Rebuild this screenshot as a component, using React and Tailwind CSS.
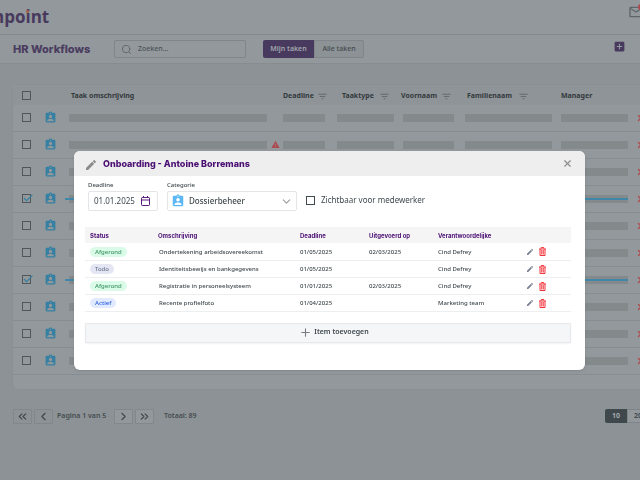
import React from "react";
import { MdAssignmentInd, MdFilterList, MdWarning, MdAddBox, MdOutlineMail } from "react-icons/md";
import { ChevronLeft, ChevronRight, ChevronsLeft, ChevronsRight, ChevronDown, X, Plus, Search } from "lucide-react";

const heading = "font-['Inter','Liberation_Sans',sans-serif] font-extrabold";

const rows = [
  { done: false, warn: false },
  { done: false, warn: true },
  { done: false, warn: false },
  { done: true, warn: false },
  { done: false, warn: false },
  { done: false, warn: false },
  { done: true, warn: false },
  { done: false, warn: false },
  { done: false, warn: false },
  { done: false, warn: false },
];

const items = [
  { status: "Afgerond", text: "Ondertekening arbeidsovereekomst", deadline: "01/05/2025", done: "02/03/2025", owner: "Cind Defrey" },
  { status: "Todo", text: "Identiteitsbewijs en bankgegevens", deadline: "01/05/2025", done: "", owner: "Cind Defrey" },
  { status: "Afgerond", text: "Registratie in personeelsysteem", deadline: "01/01/2025", done: "02/03/2025", owner: "Cind Defrey" },
  { status: "Actief", text: "Recente profielfoto", deadline: "01/04/2025", done: "", owner: "Marketing team" },
];

const badge = {
  Afgerond: "bg-[#d9fbe8] text-[#3f9467]",
  Todo: "bg-[#e4e7f3] text-[#6c7590]",
  Actief: "bg-[#e2eaff] text-[#2c62e0]",
};

function Tick({ label, checked }) {
  return (
    <span className="relative block size-[9px]">
      <input
        type="checkbox"
        aria-label={label}
        defaultChecked={checked}
        className="block size-[9px] appearance-none border border-[#50575b]"
      />
      {checked && (
        <svg viewBox="0 0 10 8" className="pointer-events-none absolute top-0 left-px h-2 w-[10px]" fill="none" stroke="#3580a3" strokeWidth="1.2">
          <path d="M1 4l2.6 2.6L9.4 .8" />
        </svg>
      )}
    </span>
  );
}

function Bar({ width }) {
  return <div className={`h-2 bg-[#84898c] ${width}`} />;
}

function HeadCell({ children, gap, className = "" }) {
  return (
    <th scope="col" className={`p-0 pt-[2px] text-left font-bold ${className}`}>
      <span className={`flex items-center ${gap || ""}`}>
        {children}
        {gap && <MdFilterList className="size-[11px] text-[#646a6d]" />}
      </span>
    </th>
  );
}

function TaskTable() {
  return (
    <div className="mt-5 ml-3 rounded-md border border-[#898f92] bg-[#92989b] pb-[14px]">
      <table className="w-full table-fixed border-collapse">
        <colgroup>
          <col className="w-[31px]" />
          <col className="w-[25px]" />
          <col className="w-[214px]" />
          <col className="w-[54px]" />
          <col className="w-[64px]" />
          <col className="w-[64px]" />
          <col className="w-[96px]" />
          <col className="w-[75px]" />
          <col />
        </colgroup>
        <thead className="bg-[#8e9497] text-[7px] text-[#33393d]">
          <tr className="h-5">
            <th className="p-0 pl-[9px]"><Tick label="Alles selecteren" /></th>
            <td />
            <HeadCell className="pl-[2px]">Taak omschrijving</HeadCell>
            <HeadCell gap="gap-[3px]">Deadline</HeadCell>
            <HeadCell gap="gap-[5px]" className="pl-[5px]">Taaktype</HeadCell>
            <HeadCell gap="gap-[4px]">Voornaam</HeadCell>
            <HeadCell gap="gap-[6px]" className="pl-[2px]">Familienaam</HeadCell>
            <HeadCell>Manager</HeadCell>
            <td />
          </tr>
        </thead>
        <tbody>
          {rows.map((r, i) => (
            <tr key={i} className="h-[27px] border-b border-[#878d90] first:h-[26px]">
              <td className="p-0 pl-[9px]"><Tick label={`Taak ${i + 1}`} checked={r.done} /></td>
              <td className="p-0"><MdAssignmentInd className="size-[13px] text-[#3580a3]" /></td>
              <td className="relative p-0">
                <div className="flex items-center gap-1">
                  <Bar width="w-[198px]" />
                  {r.warn && <MdWarning className="size-[9px] text-[#ab4a50]" />}
                </div>
                {r.done && <div className="absolute top-[12px] -left-1 h-[2px] w-[563px] bg-[#3f87a8]" />}
              </td>
              <td className="p-0"><Bar width="w-[42px]" /></td>
              <td className="p-0"><Bar width="w-[57px]" /></td>
              <td className="p-0 pl-[2px]"><Bar width="w-[51px]" /></td>
              <td className="p-0"><Bar width="w-[87px]" /></td>
              <td className="p-0"><Bar width="w-[67px]" /></td>
              <td className="p-0">
                <button type="button" aria-label="Verwijderen" className="block"><X className="size-[10px] text-[#b0474c]" strokeWidth={3} /></button>
              </td>
            </tr>
          ))}
        </tbody>
      </table>
    </div>
  );
}

function PageButton({ label, icon: Icon, active }) {
  return (
    <button
      type="button"
      aria-label={label}
      className={`flex h-[15px] w-[19px] items-center justify-center rounded-[1px] border border-[#81878a] ${active ? "bg-[#92989b]" : ""}`}
    >
      <Icon className="size-[13px] text-[#3f464a]" strokeWidth={2} />
    </button>
  );
}

function Pencil({ className }) {
  return (
    <svg viewBox="0 0 18 18" className={className} fill="currentColor">
      <path d="M0 14.200V18h3.800L14.800 6.900l-3.700-3.700zM17.700 4c.4-.4.4-1 0-1.400L15.400.3c-.4-.4-1-.4-1.400 0l-1.900 1.900 3.700 3.700z" />
    </svg>
  );
}

function Trash() {
  return (
    <svg viewBox="0 0 14 18" className="h-[9px] w-[7px]" fill="none" stroke="#f5333b" strokeWidth="2">
      <path d="M0 4h14M4.500 3.500V1h5v2.500M2 4v13h10V4M5.500 6v9M8.500 6v9" />
    </svg>
  );
}

function Calendar() {
  return (
    <svg viewBox="0 0 18 20" className="h-[10px] w-[9px]" fill="none" stroke="#5b1a7d" strokeWidth="2">
      <rect x="1" y="3" width="16" height="16" rx="1.500" />
      <path d="M1 8h16M5 0v4M13 0v4" />
    </svg>
  );
}

function Dialog() {
  return (
    <div className="fixed inset-0 pt-[151px] pr-[55px] pl-[74px]">
      <section role="dialog" aria-labelledby="dlg" className="overflow-hidden rounded-[6px] bg-white pb-[27px] text-[#3f484d] shadow-sm">
        <header className="flex h-[25px] items-center bg-[#eeeeee] pr-3 pl-3">
          <Pencil className="mt-[2px] size-[10px] text-[#8b8b8b]" />
          <h2 id="dlg" className={`ml-[7px] text-[9px] text-[#4b0f73] ${heading}`}>Onboarding - Antoine Borremans</h2>
          <button type="button" aria-label="Sluiten" className="ml-auto"><X className="size-[11px] text-[#8b8b8b]" strokeWidth={2.5} /></button>
        </header>

        <form className="flex items-end gap-[9px] px-[14px] pt-1">
          <div className="w-[70px]">
            <label htmlFor="deadline" className="block h-[11px] text-[6px] leading-[10px] font-medium">Deadline</label>
            <div className="flex h-5 items-center rounded-[2px] border border-[#e3e5e8] pr-[7px] pl-[5px]">
              <input id="deadline" defaultValue="01.01.2025" className="w-0 flex-1 text-[8px] outline-none" />
              <Calendar />
            </div>
          </div>
          <div className="w-[130px]">
            <label htmlFor="categorie" className="block h-[11px] text-[6px] leading-[10px] font-medium">Categorie</label>
            <div className="flex h-5 items-center rounded-[2px] border border-[#e3e5e8] px-[3px]">
              <MdAssignmentInd className="size-[14px] text-[#5cb8f5]" />
              <select id="categorie" className="ml-1 flex-1 appearance-none text-[8px] font-medium outline-none">
                <option>Dossierbeheer</option>
              </select>
              <ChevronDown className="size-[13px] text-[#9a9ea1]" strokeWidth={2} />
            </div>
          </div>
          <label className="flex h-5 items-center gap-[6px] pb-[2px] text-[8px]">
            <input type="checkbox" className="size-[9px] appearance-none border border-[#3f484d]" />
            Zichtbaar voor medewerker
          </label>
        </form>

        <div className="mt-4 pr-[14px] pl-[11px]">
          <table className="w-full table-fixed border-collapse text-[6px]">
            <colgroup>
              <col className="w-[73px]" />
              <col className="w-[142px]" />
              <col className="w-[69px]" />
              <col className="w-[69px]" />
              <col className="w-[88px]" />
              <col />
            </colgroup>
            <thead className={`bg-[#f5f5f6] text-[#4b0f73] ${heading}`}>
              <tr className="h-4">
                <th scope="col" className="p-0 pl-[5px] text-left">Status</th>
                <th scope="col" className="p-0 text-left">Omschrijving</th>
                <th scope="col" className="p-0 text-left">Deadline</th>
                <th scope="col" className="p-0 text-left">Uitgevoerd op</th>
                <th scope="col" className="p-0 text-left">Verantwoordelijke</th>
                <td />
              </tr>
            </thead>
            <tbody className="font-medium">
              {items.map((it) => (
                <tr key={it.text} className="h-[17px] border-b border-[#eceef0]">
                  <td className="p-0 pt-px pl-[5px]">
                    <span className={`block h-[10px] w-fit rounded-full px-[5px] leading-[10px] ${badge[it.status]}`}>{it.status}</span>
                  </td>
                  <td className="p-0 pt-[2px] pl-px">{it.text}</td>
                  <td className="p-0 pt-[2px]">{it.deadline}</td>
                  <td className="p-0 pt-[2px]">{it.done}</td>
                  <td className="p-0 pt-[2px]">{it.owner}</td>
                  <td className="p-0 pt-px pl-px">
                    <div className="flex items-center gap-[6px]">
                      <button type="button" aria-label="Bewerken"><Pencil className="size-[6px] text-[#777f93]" /></button>
                      <button type="button" aria-label="Verwijderen"><Trash /></button>
                    </div>
                  </td>
                </tr>
              ))}
            </tbody>
          </table>
          <button type="button" className="mt-[11px] flex h-5 w-full items-center justify-center gap-[2px] rounded-[1px] border border-[#e6e8eb] bg-[#f5f6f8] pl-3 text-[7px] font-semibold shadow-xs">
            <Plus className="size-[13px] text-[#777d80]" strokeWidth={2} />
            Item toevoegen
          </button>
        </div>
      </section>
    </div>
  );
}

export default function App() {
  return (
    <div className="min-h-screen overflow-hidden bg-[#8c9295] font-['Noto_Sans','Open_Sans',sans-serif] text-[#454c50]">
      <div className="min-w-[680px]">
        <header className="flex h-[35px] items-center border-b border-[#84898c] bg-[#92989b]">
          <span className="-ml-[7px] font-['Open_Sans',sans-serif] text-[17px] font-bold text-[#483a5e]">
            npo
            <span className="relative">
              i
              <span className="absolute top-[5px] left-px size-[3px] rounded-full bg-[#a9604a]" />
            </span>
            nt
          </span>
          <button type="button" aria-label="Berichten" className="relative mr-[36px] mb-[11px] ml-auto">
            <MdOutlineMail className="size-4 text-[#5f6669]" />
            <span className="absolute top-0 right-0 size-[6px] rounded-full bg-[#b0474c]" />
          </button>
        </header>
        <div className="flex h-[29px] items-center border-b border-[#868c8f] bg-[#92989b] pl-[13px]">
          <h1 className={`w-[101px] text-[11px] text-[#4b3d60] ${heading}`}>HR Workflows</h1>
          <label className="flex h-[18px] w-[132px] items-center gap-[6px] rounded-[2px] border border-[#7f8588] pl-[6px]">
            <Search className="size-[11px] text-[#5f6669]" />
            <input type="search" aria-label="Zoeken" placeholder="Zoeken..." className="w-0 flex-1 text-[7px] font-medium outline-none placeholder:text-[#4c5357]" />
          </label>
          <div className="ml-[17px] flex h-[18px] text-[7px]">
            <button type="button" className="w-[51px] rounded-l-[2px] bg-[#483a5e] font-semibold text-[#a3a7ae]">Mijn taken</button>
            <button type="button" className="w-[50px] rounded-r-[2px] border border-[#7f8588] bg-[#8c9295] font-medium">Alle taken</button>
          </div>
          <button type="button" aria-label="Toevoegen" className="mr-[54px] mb-[6px] ml-auto"><MdAddBox className="size-[13px] text-[#483a5e]" /></button>
        </div>

        <TaskTable />

        <nav aria-label="Pagina's" className="mt-[19px] flex items-center pl-[13px] text-[7px] font-semibold">
          <PageButton label="Eerste" icon={ChevronsLeft} />
          <div className="ml-[2px]"><PageButton label="Vorige" icon={ChevronLeft} /></div>
          <span className="w-[61px] pl-1">Pagina 1 van 5</span>
          <div className="flex gap-[2px]">
            <PageButton label="Volgende" icon={ChevronRight} active />
            <PageButton label="Laatste" icon={ChevronsRight} active />
          </div>
          <span className="ml-[10px]">Totaal: 89</span>
          <div className="mr-[31px] ml-auto flex h-[14px] font-bold">
            <button type="button" className="w-[22px] rounded-l-[2px] bg-[#3f484d] text-[#a3a9ac]">10</button>
            <button type="button" className="w-[22px] border border-[#7f8588] bg-[#92989b]">20</button>
          </div>
        </nav>
      </div>
      <Dialog />
    </div>
  );
}
